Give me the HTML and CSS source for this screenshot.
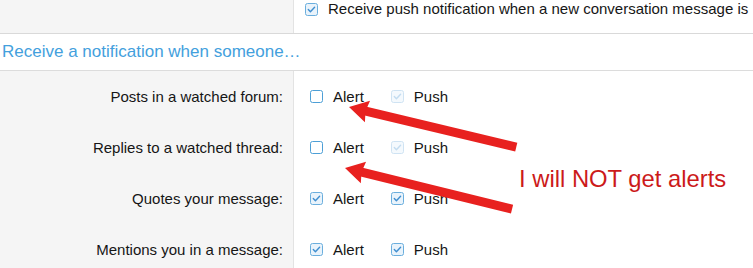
FILE: index.html
```html
<!DOCTYPE html>
<html lang="en">
<head>
<meta charset="utf-8">
<title>Notification preferences</title>
<link rel="stylesheet" href="styles.css">
</head>
<body>
<div class="page">
  <div class="row row-top">
    <div class="label"></div>
    <div class="field field-top">
      <span class="opt">
        <svg class="cb" viewBox="0 0 13 13"><rect class="box checked" x="0.5" y="0.5" width="12" height="12" rx="2"/><polyline class="tick" points="3.3,6.6 5.4,8.7 9.6,4.2"/></svg>
        <span>Receive push notification when a new conversation message is</span>
      </span>
    </div>
  </div>

  <h3 class="heading">Receive a notification when someone…</h3>

  <div class="row">
    <div class="label">Posts in a watched forum:</div>
    <div class="field">
      <span class="opt"><svg class="cb" viewBox="0 0 13 13"><rect class="box" x="0.5" y="0.5" width="12" height="12" rx="2"/></svg><span>Alert</span></span>
      <span class="opt"><svg class="cb dis" viewBox="0 0 13 13"><rect class="box checked" x="0.5" y="0.5" width="12" height="12" rx="2"/><polyline class="tick" points="3.3,6.6 5.4,8.7 9.6,4.2"/></svg><span>Push</span></span>
    </div>
  </div>

  <div class="row">
    <div class="label">Replies to a watched thread:</div>
    <div class="field">
      <span class="opt"><svg class="cb" viewBox="0 0 13 13"><rect class="box" x="0.5" y="0.5" width="12" height="12" rx="2"/></svg><span>Alert</span></span>
      <span class="opt"><svg class="cb dis" viewBox="0 0 13 13"><rect class="box checked" x="0.5" y="0.5" width="12" height="12" rx="2"/><polyline class="tick" points="3.3,6.6 5.4,8.7 9.6,4.2"/></svg><span>Push</span></span>
    </div>
  </div>

  <div class="row">
    <div class="label">Quotes your message:</div>
    <div class="field">
      <span class="opt"><svg class="cb" viewBox="0 0 13 13"><rect class="box checked" x="0.5" y="0.5" width="12" height="12" rx="2"/><polyline class="tick" points="3.3,6.6 5.4,8.7 9.6,4.2"/></svg><span>Alert</span></span>
      <span class="opt"><svg class="cb" viewBox="0 0 13 13"><rect class="box checked" x="0.5" y="0.5" width="12" height="12" rx="2"/><polyline class="tick" points="3.3,6.6 5.4,8.7 9.6,4.2"/></svg><span>Push</span></span>
    </div>
  </div>

  <div class="row">
    <div class="label">Mentions you in a message:</div>
    <div class="field">
      <span class="opt"><svg class="cb" viewBox="0 0 13 13"><rect class="box checked" x="0.5" y="0.5" width="12" height="12" rx="2"/><polyline class="tick" points="3.3,6.6 5.4,8.7 9.6,4.2"/></svg><span>Alert</span></span>
      <span class="opt"><svg class="cb" viewBox="0 0 13 13"><rect class="box checked" x="0.5" y="0.5" width="12" height="12" rx="2"/><polyline class="tick" points="3.3,6.6 5.4,8.7 9.6,4.2"/></svg><span>Push</span></span>
    </div>
  </div>

  <svg class="arrows" viewBox="0 0 753 268" width="753" height="268">
    <g transform="translate(349,107) rotate(13.5)">
      <line class="shaft" x1="14" y1="0" x2="172" y2="0"/>
      <polygon class="head" points="0,0 19,-11 17,0 19,11"/>
    </g>
    <g transform="translate(345,168) rotate(13.8)">
      <line class="shaft" x1="14" y1="0" x2="172" y2="0"/>
      <polygon class="head" points="0,0 19,-11 17,0 19,11"/>
    </g>
  </svg>
  <div class="note">I will NOT get alerts</div>
</div>
</body>
</html>
```

FILE: styles.css
```css
html, body {
  margin: 0;
  padding: 0;
  background: #ffffff;
}

body {
  font-family: "Liberation Sans", Arial, Helvetica, sans-serif;
  font-size: 15px;
  color: #161616;
  overflow: hidden;
  width: 753px;
  height: 268px;
}

.page {
  position: relative;
  width: 753px;
  height: 268px;
  overflow: hidden;
}

.row {
  display: flex;
  height: 51px;
}

.row-top {
  height: 33px;
  border-bottom: 1px solid #d9d9d9;
}

.label {
  flex: 0 0 294px;
  box-sizing: border-box;
  background: #f5f5f5;
  border-right: 1px solid #e3e3e3;
  padding-right: 10px;
  display: flex;
  align-items: center;
  justify-content: flex-end;
  white-space: nowrap;
}

.field {
  flex: 1;
  display: flex;
  align-items: center;
  padding-left: 16px;
  white-space: nowrap;
}

.field-top {
  align-items: flex-start;
  padding-left: 11px;
  line-height: 18px;
}

.field-top .opt {
  height: 18px;
  margin-right: 0;
}

.opt {
  display: inline-flex;
  align-items: center;
  gap: 10px;
  margin-right: 27px;
}

.cb {
  width: 13px;
  height: 13px;
  flex: 0 0 13px;
  display: block;
}

.box {
  fill: #ffffff;
  stroke: #4d9fd6;
  stroke-width: 1;
}

.box.checked {
  fill: #e9f3fb;
  stroke: #6aaedd;
}

.tick {
  fill: none;
  stroke: #3f8ecf;
  stroke-width: 1.4;
  stroke-linecap: round;
  stroke-linejoin: round;
}

.cb.dis .box.checked {
  fill: #f4f9fd;
  stroke: #cfe3f3;
}

.cb.dis .tick {
  stroke: #c3dcf0;
}

.heading {
  margin: 0;
  height: 36px;
  line-height: 36px;
  padding-left: 2px;
  font-size: 17px;
  font-weight: normal;
  color: #43a0dd;
  border-bottom: 1px solid #dcdcdc;
  white-space: nowrap;
}

.arrows {
  position: absolute;
  left: 0;
  top: 0;
  pointer-events: none;
}

.shaft {
  stroke: #e8211f;
  stroke-width: 9;
}

.head {
  fill: #e8211f;
}

.note {
  position: absolute;
  left: 519px;
  top: 165px;
  font-size: 23.8px;
  line-height: 27px;
  color: #cc1a1a;
  white-space: nowrap;
}
```
